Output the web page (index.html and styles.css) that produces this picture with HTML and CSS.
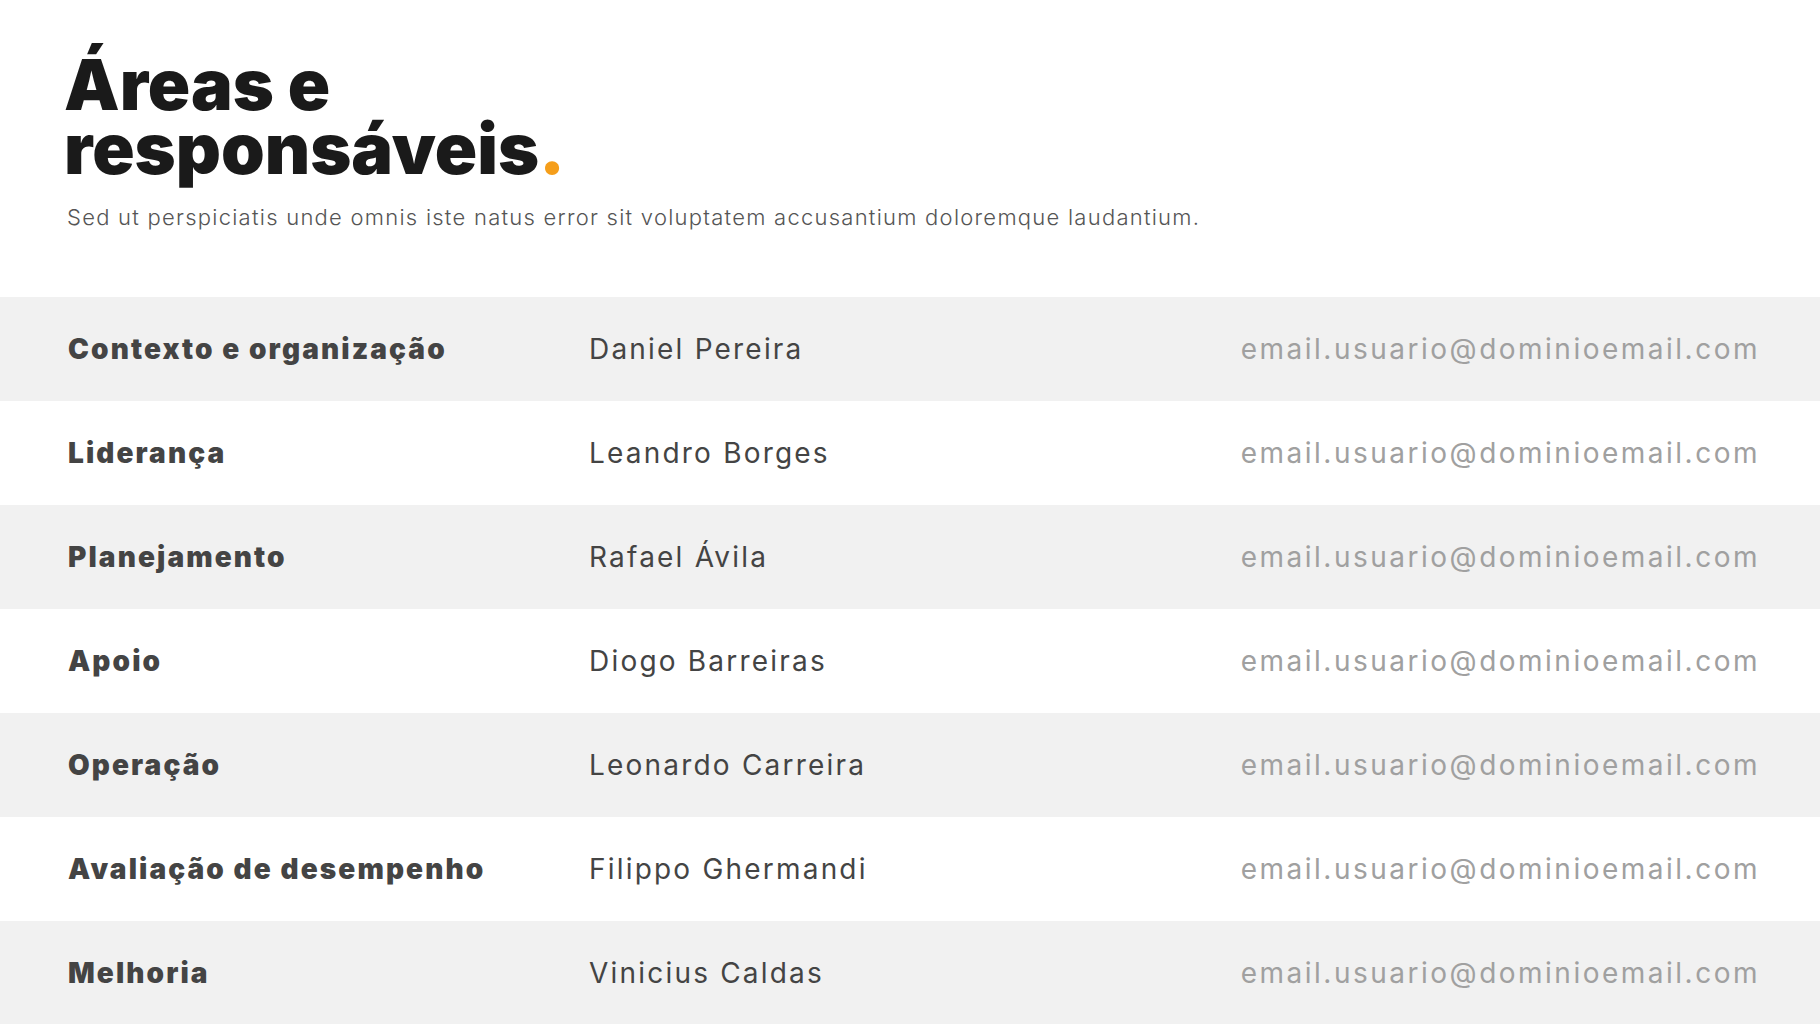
FILE: index.html
```html
<!DOCTYPE html>
<html lang="pt">
<head>
<meta charset="utf-8">
<title>Áreas e responsáveis</title>
<link rel="stylesheet" href="styles.css">
</head>
<body>
<header class="intro">
  <h1 class="title">Áreas e<br>responsáveis<span class="dot">.</span></h1>
  <p class="lead">Sed ut perspiciatis unde omnis iste natus error sit voluptatem accusantium doloremque laudantium.</p>
</header>
<section class="table">
  <div class="row alt"><span class="area">Contexto e organização</span><span class="name">Daniel Pereira</span><span class="email">email.usuario@dominioemail.com</span></div>
  <div class="row"><span class="area">Liderança</span><span class="name">Leandro Borges</span><span class="email">email.usuario@dominioemail.com</span></div>
  <div class="row alt"><span class="area">Planejamento</span><span class="name">Rafael Ávila</span><span class="email">email.usuario@dominioemail.com</span></div>
  <div class="row"><span class="area">Apoio</span><span class="name">Diogo Barreiras</span><span class="email">email.usuario@dominioemail.com</span></div>
  <div class="row alt"><span class="area">Operação</span><span class="name">Leonardo Carreira</span><span class="email">email.usuario@dominioemail.com</span></div>
  <div class="row"><span class="area">Avaliação de desempenho</span><span class="name">Filippo Ghermandi</span><span class="email">email.usuario@dominioemail.com</span></div>
  <div class="row alt"><span class="area">Melhoria</span><span class="name">Vinicius Caldas</span><span class="email">email.usuario@dominioemail.com</span></div>
</section>
</body>
</html>
```
FILE: styles.css
```css
html, body {
  margin: 0;
  padding: 0;
  background: #ffffff;
}
body {
  width: 1820px;
  height: 1024px;
  overflow: hidden;
  font-family: Inter, "Noto Sans", sans-serif;
}
.intro {
  height: 297px;
  box-sizing: border-box;
  padding: 53px 0 0 64px;
}
.title {
  margin: 0;
  font-family: Inter, sans-serif;
  font-weight: 900;
  font-size: 70px;
  line-height: 64px;
  letter-spacing: 0;
  color: #1a1a1a;
}
.dot {
  color: #f59e1a;
}
.lead {
  margin: 23px 0 0 3px;
  font-size: 22px;
  line-height: 26px;
  font-weight: 300;
  color: #555555;
  letter-spacing: 1.25px;
}
.table {
  display: flex;
  flex-direction: column;
}
.row {
  height: 104px;
  display: grid;
  grid-template-columns: 521px 1fr auto;
  align-items: center;
  padding: 0 60px 0 68px;
  font-size: 28px;
}
.row.alt {
  background: #f1f1f1;
}
.area {
  font-weight: 900;
  color: #444444;
  letter-spacing: 2.1px;
}
.name {
  font-weight: 400;
  color: #444444;
  letter-spacing: 2.2px;
}
.email {
  font-weight: 400;
  color: #a0a0a0;
  letter-spacing: 2.5px;
}
```
